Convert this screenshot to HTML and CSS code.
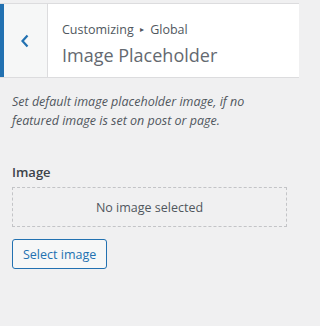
FILE: index.html
```html
<!DOCTYPE html>
<html>
<head>
<meta charset="utf-8">
<link rel="stylesheet" href="styles.css">
</head>
<body>
<div class="page">
  <div class="topbar"></div>
  <div class="header">
    <button class="back" type="button" aria-label="Back">
      <svg width="10" height="14" viewBox="0 0 10 14"><path d="M7.5 1.5 L2.5 7 L7.5 12.5" fill="none" stroke="#2271b1" stroke-width="2.2"/></svg>
    </button>
    <div class="titles">
      <div class="crumb">Customizing <span class="sep">▸</span> Global</div>
      <div class="title">Image Placeholder</div>
    </div>
  </div>
  <div class="content">
    <p class="desc">Set default image placeholder image, if no featured image is set on post or page.</p>
    <div class="label">Image</div>
    <div class="placeholder">No image selected</div>
    <button class="select" type="button">Select image</button>
  </div>
</div>
</body>
</html>
```

FILE: styles.css
```css
html, body {
  margin: 0;
  padding: 0;
  background: #f0f0f1;
  font-family: "Open Sans", "Noto Sans", sans-serif;
  color: #50575e;
}
.page {
  width: 299px;
  min-height: 326px;
}
.topbar {
  height: 3px;
  border-bottom: 1px solid #dcdcde;
}
.header {
  display: flex;
  height: 73px;
  background: #fff;
  border-bottom: 1px solid #dcdcde;
}
.back {
  width: 48px;
  flex: none;
  margin: 0;
  background: #f6f7f7;
  border: none;
  border-left: 4px solid #2271b1;
  border-right: 1px solid #dcdcde;
  display: flex;
  align-items: center;
  justify-content: center;
  padding: 0 1px 0 0;
}
.titles {
  padding: 15px 0 0 14px;
}
.crumb {
  font-size: 12.5px;
  line-height: 20px;
  color: #50575e;
}
.sep {
  font-size: 8px;
  vertical-align: 2px;
  margin: 0 3px;
}
.title {
  font-size: 18px;
  line-height: 28px;
  color: #646970;
  margin-top: 1px;
}
.content {
  padding: 0 12px;
}
.desc {
  margin: 14px 0 0;
  font-size: 12.5px;
  line-height: 19px;
  font-style: italic;
  color: #50575e;
}
.label {
  margin-top: 33px;
  font-size: 13px;
  line-height: 18px;
  font-weight: 600;
  color: #3c434a;
}
.placeholder {
  margin-top: 6px;
  height: 38px;
  border: 1px dashed #c3c4c7;
  display: flex;
  align-items: center;
  justify-content: center;
  font-size: 12.5px;
  color: #50575e;
}
.select {
  display: block;
  margin-top: 12px;
  height: 30px;
  padding: 0 10px;
  background: #f6f7f7;
  border: 1px solid #2271b1;
  border-radius: 3px;
  color: #2271b1;
  font-family: inherit;
  font-size: 12.5px;
}
```
